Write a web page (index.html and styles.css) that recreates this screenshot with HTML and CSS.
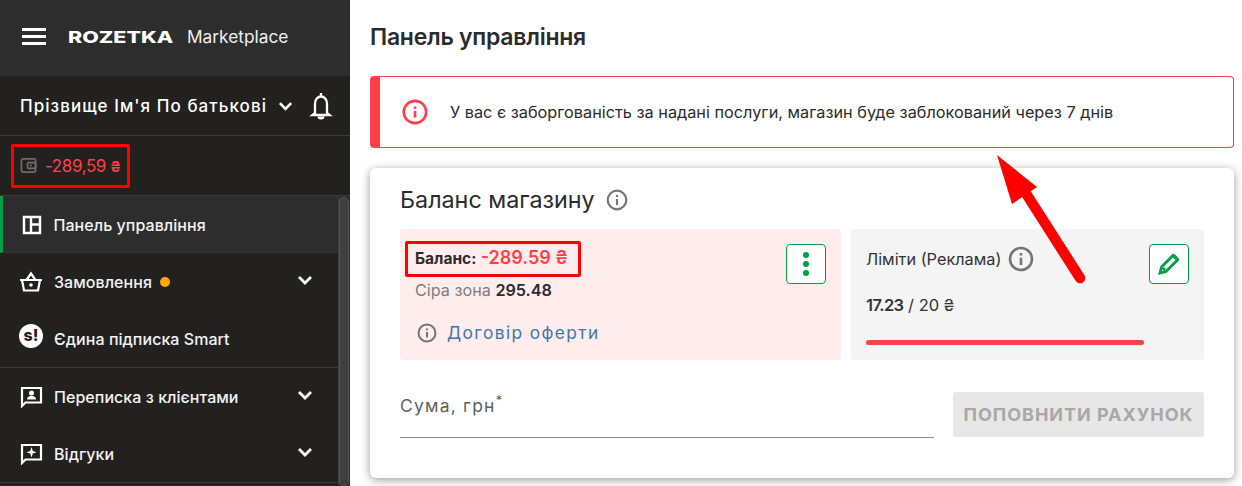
FILE: index.html
```html
<!DOCTYPE html>
<html lang="uk">
<head>
    <meta name="viewport" content="width=device-width, initial-scale=1">
    <link rel="stylesheet" href="styles.css">
    <title>Панель управління</title>
</head>
<body>
<div class="page">
    <aside class="sidebar">
        <div class="logoRow">
            <span class="burger"><i></i><i></i><i></i></span>
            <span class="logo">ROZETKA</span>
            <span class="market">Marketplace</span>
        </div>
        <div class="userRow">
            <span class="userName">Прізвище Ім'я По батькові</span>
            <svg class="chev small" viewBox="0 0 16 10"><path d="M2 2l6 6 6-6"/></svg>
            <svg class="bell" viewBox="0 0 24 28"><path d="M12 1v3M6 21V11.500a6 7 0 0 1 12 0V21l2.500 2H3.500z"/><path class="fill" d="M8.500 24.500h7a3.500 3 0 0 1-7 0z"/></svg>
        </div>
        <div class="walletRow">
            <div class="walletBox">
                <svg class="wallet" viewBox="0 0 18 18"><rect x="1.500" y="2" width="15" height="14" rx="2"/><rect x="8" y="6" width="8.500" height="6" rx="1"/><rect class="fill" x="10.500" y="8" width="2" height="2"/></svg>
                <span class="walletSum">-289,59 <small>₴</small></span>
            </div>
        </div>
        <div class="menu">
            <div class="menuList">
                <a class="menuItem active">
                    <svg class="ico panelIco" viewBox="0 0 20 20"><path d="M2 2h16v16H2zM9 2v16M9 9.500h9"/></svg>
                    <span>Панель управління</span>
                </a>
                <a class="menuItem">
                    <svg class="ico" viewBox="0 0 24 20"><path d="M1 8h22M3 8l2 10.500h14L21 8M7.500 8L12 1.500 16.500 8"/><circle class="fill" cx="12" cy="13" r="1.800"/></svg>
                    <span>Замовлення</span><span class="dot"></span>
                    <svg class="chev" viewBox="0 0 16 10"><path d="M2 2l6 6 6-6"/></svg>
                </a>
                <a class="menuItem divided">
                    <span class="smart">s!</span>
                    <span>Єдина підписка Smart</span>
                </a>
                <a class="menuItem">
                    <svg class="ico" viewBox="0 0 24 22"><path d="M3 2h19v14.500H6.500L3 20z"/><circle class="fill" cx="12.500" cy="7" r="2.500"/><path class="fill" d="M8 13.500c0-5 9-5 9 0z"/></svg>
                    <span>Переписка з клієнтами</span>
                    <svg class="chev" viewBox="0 0 16 10"><path d="M2 2l6 6 6-6"/></svg>
                </a>
                <a class="menuItem divided">
                    <svg class="ico" viewBox="0 0 24 22"><path d="M3 2h19v14.500H6.500L3 20z"/><path class="fill" d="M12.500 4l1.300 4 3.700 1.300-3.700 1.200-1.300 4-1.300-4-3.700-1.200 3.700-1.300z"/></svg>
                    <span>Відгуки</span>
                    <svg class="chev" viewBox="0 0 16 10"><path d="M2 2l6 6 6-6"/></svg>
                </a>
            </div>
            <div class="scrollTrack"><div class="scrollThumb"></div></div>
        </div>
    </aside>

    <main class="content">
        <h1 class="pageTitle">Панель управління</h1>
        <div class="alert">
            <svg class="alertIco" viewBox="0 0 26 26"><circle cx="13" cy="13" r="11.200"/><path d="M13 12v6.500M13 7.500v2.200"/></svg>
            <span>У вас є заборгованість за надані послуги, магазин буде заблокований через 7 днів</span>
        </div>
        <section class="card">
            <h2 class="cardTitle">Баланс магазину
                <svg class="info" viewBox="0 0 22 22"><circle cx="11" cy="11" r="9.300"/><path d="M11 10v6M11 6v2"/></svg>
            </h2>
            <div class="panels">
                <div class="panel panelRed">
                    <div class="panelText">
                        <div class="balanceBox"><b>Баланс:</b> <b class="red">-289.59 ₴</b></div>
                        <div class="grey">Сіра зона <b>295.48</b></div>
                        <div class="offer">
                            <svg class="info offerIco" viewBox="0 0 22 22"><circle cx="11" cy="11" r="9.300"/><path d="M11 10v6M11 6v2"/></svg>
                            <a>Договір оферти</a>
                        </div>
                    </div>
                    <button class="iconBtn"><span></span><span></span><span></span></button>
                </div>
                <div class="panel panelGrey">
                    <div class="panelText limits">
                        <div class="limitTitle">Ліміти (Реклама)
                            <svg class="info limitIco" viewBox="0 0 22 22"><circle cx="11" cy="11" r="9.300"/><path d="M11 10v6M11 6v2"/></svg>
                        </div>
                        <div class="limitSum"><b>17.23</b> / 20 ₴</div>
                        <div class="limitBar"></div>
                    </div>
                    <button class="iconBtn">
                        <svg class="pencil" viewBox="0 0 24 24"><path d="M3 21l1.500-6L16 3.500l4.500 4.500L9 19.500zM6 16l2 2" /><path class="fill" d="M17.500 2l4.500 4.500-1.500 1.500L16 3.500z"/></svg>
                    </button>
                </div>
            </div>
            <div class="topUp">
                <div class="amount"><span>Сума, грн<sup>*</sup></span></div>
                <button class="topUpBtn">Поповнити рахунок</button>
            </div>
        </section>
    </main>
</div>
<svg class="arrow" viewBox="0 0 100 130"><path class="arrowLine" d="M83 123L30 40"/><path class="arrowHead" d="M0 0L40 32 15 49z"/></svg>
</body>
</html>
```

FILE: styles.css
```css
* {
    box-sizing: border-box;
}
html, body {
    margin: 0;
    height: 100%;
    overflow: hidden;
}
body {
    font-family: "Inter", "Noto Sans", sans-serif;
    background: #fff;
    color: #2b2b2b;
}
.page {
    display: flex;
    height: 486px;
}

/* sidebar */
.sidebar {
    width: 350px;
    flex-shrink: 0;
    display: flex;
    flex-direction: column;
    background: #222120;
    color: #fff;
}
.logoRow {
    height: 76px;
    flex-shrink: 0;
    display: flex;
    align-items: center;
    padding-left: 22px;
    padding-bottom: 3px;
    background: #2d2d2d;
}
.burger {
    display: flex;
    flex-direction: column;
    gap: 4.500px;
    width: 24px;
    margin-right: 22px;
}
.burger i {
    display: block;
    height: 2.500px;
    background: #fff;
}
.logo {
    font-weight: 800;
    font-size: 16.500px;
    transform: scaleX(1.300);
    transform-origin: left center;
    width: 119px;
}
.market {
    font-size: 17.300px;
    color: #f0f0f0;
}
.userRow {
    height: 60px;
    flex-shrink: 0;
    display: flex;
    align-items: center;
    padding-left: 20px;
    border-bottom: 1px solid #3a3a3a;
}
.userName {
    font-size: 17px;
    font-weight: 500;
    letter-spacing: 1.050px;
    width: 258px;
    white-space: nowrap;
}
.chev {
    width: 16px;
    height: 10px;
    fill: none;
    stroke: #fff;
    stroke-width: 2.800;
}
.chev.small {
    width: 15px;
    height: 10px;
}
.bell {
    width: 24px;
    height: 28px;
    margin-left: 16px;
    fill: none;
    stroke: #fff;
    stroke-width: 2.300;
}
.fill {
    fill: #fff;
    stroke: none;
}
.walletRow {
    height: 60px;
    flex-shrink: 0;
    display: flex;
    align-items: center;
    padding-left: 11px;
    border-bottom: 1px solid #3a3a3a;
}
.walletBox {
    display: flex;
    align-items: center;
    width: 119px;
    height: 44px;
    padding-left: 6px;
    border: 3px solid #f00;
    border-radius: 2px;
}
.wallet {
    width: 17px;
    height: 17px;
    margin-right: 8px;
    fill: none;
    stroke: #6d6d6d;
    stroke-width: 1.800;
}
.wallet .fill {
    fill: #6d6d6d;
}
.walletSum {
    color: #ff3f4a;
    font-size: 17px;
    letter-spacing: -0.400px;
    white-space: nowrap;
}
.walletSum small {
    font-size: 15px;
    font-weight: 600;
}
.menu {
    flex: 1;
    display: flex;
    min-height: 0;
}
.menuList {
    width: 338px;
    flex-shrink: 0;
}
.menuItem {
    display: flex;
    align-items: center;
    height: 57px;
    padding-left: 19px;
    font-size: 16px;
    font-weight: 500;
    letter-spacing: 0.050px;
    color: #f3f3f3;
    white-space: nowrap;
}
.menuItem.active {
    background: #2d2d2d;
    border-left: 3.500px solid #00a046;
    padding-left: 18.500px;
    padding-top: 2px;
    border-bottom: 1px solid #333;
}
.menuItem.divided {
    height: 58px;
    border-bottom: 1px solid #3a3a3a;
}
.ico {
    width: 24px;
    height: 22px;
    margin-right: 11px;
    flex-shrink: 0;
    fill: none;
    stroke: #fff;
    stroke-width: 2.200;
}
.panelIco {
    width: 20px;
    margin-right: 12px;
    stroke-width: 2.400;
}
.smart {
    width: 24px;
    height: 24px;
    margin-right: 11px;
    margin-bottom: 5px;
    border-radius: 50%;
    background: #fff;
    color: #222120;
    font-size: 16px;
    font-weight: 800;
    line-height: 22px;
    text-align: center;
    flex-shrink: 0;
}
.dot {
    width: 10px;
    height: 10px;
    margin-left: 8px;
    border-radius: 50%;
    background: #ffa900;
}
.menuItem .chev {
    margin-left: auto;
    margin-right: 25px;
    margin-bottom: 3px;
}
.scrollTrack {
    flex: 1;
    background: #2d2d2d;
    border-left: 1px solid #3c3c3c;
    padding-top: 1px;
}
.scrollThumb {
    width: 10px;
    height: 100%;
    background: #3f3f3f;
    border: 1px solid #555;
    border-radius: 6px;
}

/* main part */
.content {
    flex: 1;
    padding: 0 8px 0 20px;
    min-width: 0;
}
.pageTitle {
    margin: 0;
    height: 76px;
    padding-bottom: 2px;
    display: flex;
    align-items: center;
    font-size: 23px;
    font-weight: 600;
    letter-spacing: -0.250px;
}
.alert {
    display: flex;
    align-items: center;
    height: 72px;
    padding-left: 22px;
    border: 1px solid #ff3f4a;
    border-left: 10px solid #ff3f4a;
    border-radius: 4px;
    font-size: 16.270px;
}
.alertIco {
    width: 26px;
    height: 26px;
    margin-right: 22px;
    fill: none;
    stroke: #ff3f4a;
    stroke-width: 2.700;
}
.card {
    height: 310px;
    margin-top: 20px;
    padding: 0 30px;
    background: #fff;
    border-radius: 6px;
    box-shadow: 0 2px 10px rgba(0, 0, 0, .4);
}
.cardTitle {
    margin: 0;
    height: 61px;
    padding-top: 2px;
    display: flex;
    align-items: center;
    gap: 11px;
    font-size: 23.300px;
    font-weight: 400;
}
.info {
    width: 22px;
    height: 22px;
    fill: none;
    stroke: #757575;
    stroke-width: 2.200;
}
.panels {
    display: flex;
    gap: 10px;
    height: 131px;
}
.panel {
    display: flex;
    justify-content: space-between;
    border-radius: 4px;
    padding: 15px 15px 0 15px;
}
.panelRed {
    width: 441px;
    background: #ffecec;
}
.panelGrey {
    width: 353px;
    background: #f4f4f4;
}
.panelText {
    flex: 1;
    font-size: 16px;
}
.balanceBox {
    display: inline-block;
    height: 36px;
    margin: -3px 0 0 -10px;
    padding: 3px 10px 0 7px;
    border: 3px solid #f00;
    border-radius: 2px;
    font-size: 15.500px;
    white-space: nowrap;
}
.red {
    color: #ff3f4a;
    font-size: 18px;
    font-weight: 600;
}
.grey {
    margin-top: 3px;
    color: #7d7d7d;
    font-size: 16.200px;
}
.grey b {
    color: #2b2b2b;
    font-weight: 600;
}
.offer {
    display: flex;
    align-items: center;
    gap: 10px;
    margin-top: 22px;
    margin-left: 2px;
}
.offerIco {
    width: 20px;
    height: 20px;
}
.offer a {
    color: #3e77aa;
    font-size: 17.300px;
    letter-spacing: 1.400px;
}
.iconBtn {
    display: flex;
    flex-direction: column;
    align-items: center;
    justify-content: center;
    gap: 3px;
    width: 40px;
    height: 40px;
    padding: 0;
    background: #fff;
    border: 1px solid #00a046;
    border-radius: 4px;
}
.iconBtn span {
    width: 6px;
    height: 6px;
    border-radius: 50%;
    background: #00a046;
}
.panel .iconBtn {
    flex-shrink: 0;
}
.pencil {
    width: 24px;
    height: 24px;
    fill: none;
    stroke: #00a046;
    stroke-width: 2.800;
}
.pencil .fill {
    fill: #00a046;
}
.limitTitle {
    display: flex;
    align-items: center;
    gap: 7px;
    height: 30px;
    color: #333;
    font-size: 16.300px;
}
.limitIco {
    width: 26px;
    height: 26px;
}
.limitSum {
    margin-top: 21px;
    font-size: 16.500px;
    color: #333;
}
.limitSum b {
    font-weight: 600;
    letter-spacing: -0.600px;
}
.limitBar {
    width: 278px;
    height: 5px;
    margin-top: 25px;
    border-radius: 3px;
    background: #ff3f4a;
}
.topUp {
    display: flex;
    justify-content: space-between;
    margin-top: 32px;
}
.amount {
    width: 534px;
    height: 46px;
    padding-top: 3px;
    border-bottom: 1px solid #8a8a8a;
    color: #5f5f5f;
    font-size: 17.500px;
    letter-spacing: 1.200px;
}
.amount sup {
    font-size: 13px;
    line-height: 0;
}
.topUpBtn {
    width: 251px;
    height: 45px;
    padding: 0;
    border: 0;
    border-radius: 3px;
    background: #e7e7e7;
    color: #a8a8a8;
    font-family: inherit;
    font-size: 18px;
    font-weight: 700;
    text-transform: uppercase;
    letter-spacing: 0.970px;
    white-space: nowrap;
}

/* annotation drawn over the screenshot */
.arrow {
    position: absolute;
    left: 997px;
    top: 155px;
    width: 100px;
    height: 130px;
}
.arrowLine {
    fill: none;
    stroke: #f00;
    stroke-width: 10.500;
    stroke-linecap: round;
}
.arrowHead {
    fill: #f00;
}
```
